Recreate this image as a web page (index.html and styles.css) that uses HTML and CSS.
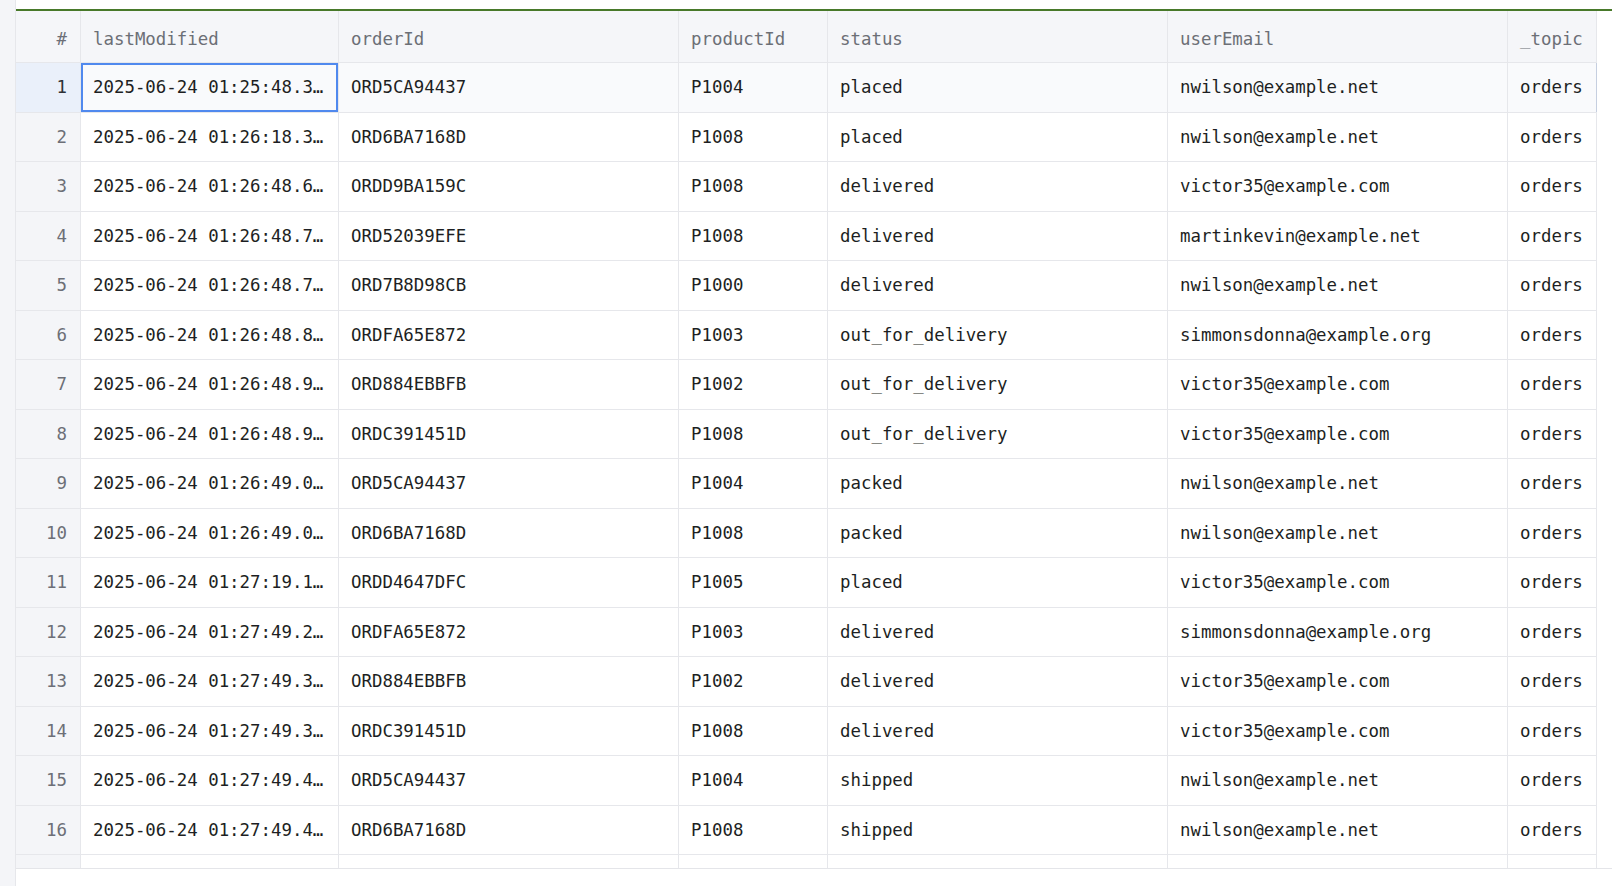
FILE: index.html
```html
<!DOCTYPE html>
<html lang="en">
<head>
<meta charset="utf-8">
<title>orders</title>
<link rel="stylesheet" href="styles.css">
</head>
<body>
<div class="page">
  <div class="strip"></div>
  <div class="main">
    <div class="grid">
      <div class="row head">
        <div class="cell num">#</div>
        <div class="cell c-lm">lastModified</div>
        <div class="cell c-oid">orderId</div>
        <div class="cell c-pid">productId</div>
        <div class="cell c-st">status</div>
        <div class="cell c-em">userEmail</div>
        <div class="cell c-tp">_topic</div>
      </div>
      <div class="row active">
        <div class="cell num">1</div>
        <div class="cell c-lm focus">2025-06-24 01:25:48.3…</div>
        <div class="cell c-oid">ORD5CA94437</div>
        <div class="cell c-pid">P1004</div>
        <div class="cell c-st">placed</div>
        <div class="cell c-em">nwilson@example.net</div>
        <div class="cell c-tp">orders</div>
      </div>
      <div class="row">
        <div class="cell num">2</div>
        <div class="cell c-lm">2025-06-24 01:26:18.3…</div>
        <div class="cell c-oid">ORD6BA7168D</div>
        <div class="cell c-pid">P1008</div>
        <div class="cell c-st">placed</div>
        <div class="cell c-em">nwilson@example.net</div>
        <div class="cell c-tp">orders</div>
      </div>
      <div class="row">
        <div class="cell num">3</div>
        <div class="cell c-lm">2025-06-24 01:26:48.6…</div>
        <div class="cell c-oid">ORDD9BA159C</div>
        <div class="cell c-pid">P1008</div>
        <div class="cell c-st">delivered</div>
        <div class="cell c-em">victor35@example.com</div>
        <div class="cell c-tp">orders</div>
      </div>
      <div class="row">
        <div class="cell num">4</div>
        <div class="cell c-lm">2025-06-24 01:26:48.7…</div>
        <div class="cell c-oid">ORD52039EFE</div>
        <div class="cell c-pid">P1008</div>
        <div class="cell c-st">delivered</div>
        <div class="cell c-em">martinkevin@example.net</div>
        <div class="cell c-tp">orders</div>
      </div>
      <div class="row">
        <div class="cell num">5</div>
        <div class="cell c-lm">2025-06-24 01:26:48.7…</div>
        <div class="cell c-oid">ORD7B8D98CB</div>
        <div class="cell c-pid">P1000</div>
        <div class="cell c-st">delivered</div>
        <div class="cell c-em">nwilson@example.net</div>
        <div class="cell c-tp">orders</div>
      </div>
      <div class="row">
        <div class="cell num">6</div>
        <div class="cell c-lm">2025-06-24 01:26:48.8…</div>
        <div class="cell c-oid">ORDFA65E872</div>
        <div class="cell c-pid">P1003</div>
        <div class="cell c-st">out_for_delivery</div>
        <div class="cell c-em">simmonsdonna@example.org</div>
        <div class="cell c-tp">orders</div>
      </div>
      <div class="row">
        <div class="cell num">7</div>
        <div class="cell c-lm">2025-06-24 01:26:48.9…</div>
        <div class="cell c-oid">ORD884EBBFB</div>
        <div class="cell c-pid">P1002</div>
        <div class="cell c-st">out_for_delivery</div>
        <div class="cell c-em">victor35@example.com</div>
        <div class="cell c-tp">orders</div>
      </div>
      <div class="row">
        <div class="cell num">8</div>
        <div class="cell c-lm">2025-06-24 01:26:48.9…</div>
        <div class="cell c-oid">ORDC391451D</div>
        <div class="cell c-pid">P1008</div>
        <div class="cell c-st">out_for_delivery</div>
        <div class="cell c-em">victor35@example.com</div>
        <div class="cell c-tp">orders</div>
      </div>
      <div class="row">
        <div class="cell num">9</div>
        <div class="cell c-lm">2025-06-24 01:26:49.0…</div>
        <div class="cell c-oid">ORD5CA94437</div>
        <div class="cell c-pid">P1004</div>
        <div class="cell c-st">packed</div>
        <div class="cell c-em">nwilson@example.net</div>
        <div class="cell c-tp">orders</div>
      </div>
      <div class="row">
        <div class="cell num">10</div>
        <div class="cell c-lm">2025-06-24 01:26:49.0…</div>
        <div class="cell c-oid">ORD6BA7168D</div>
        <div class="cell c-pid">P1008</div>
        <div class="cell c-st">packed</div>
        <div class="cell c-em">nwilson@example.net</div>
        <div class="cell c-tp">orders</div>
      </div>
      <div class="row">
        <div class="cell num">11</div>
        <div class="cell c-lm">2025-06-24 01:27:19.1…</div>
        <div class="cell c-oid">ORDD4647DFC</div>
        <div class="cell c-pid">P1005</div>
        <div class="cell c-st">placed</div>
        <div class="cell c-em">victor35@example.com</div>
        <div class="cell c-tp">orders</div>
      </div>
      <div class="row">
        <div class="cell num">12</div>
        <div class="cell c-lm">2025-06-24 01:27:49.2…</div>
        <div class="cell c-oid">ORDFA65E872</div>
        <div class="cell c-pid">P1003</div>
        <div class="cell c-st">delivered</div>
        <div class="cell c-em">simmonsdonna@example.org</div>
        <div class="cell c-tp">orders</div>
      </div>
      <div class="row">
        <div class="cell num">13</div>
        <div class="cell c-lm">2025-06-24 01:27:49.3…</div>
        <div class="cell c-oid">ORD884EBBFB</div>
        <div class="cell c-pid">P1002</div>
        <div class="cell c-st">delivered</div>
        <div class="cell c-em">victor35@example.com</div>
        <div class="cell c-tp">orders</div>
      </div>
      <div class="row">
        <div class="cell num">14</div>
        <div class="cell c-lm">2025-06-24 01:27:49.3…</div>
        <div class="cell c-oid">ORDC391451D</div>
        <div class="cell c-pid">P1008</div>
        <div class="cell c-st">delivered</div>
        <div class="cell c-em">victor35@example.com</div>
        <div class="cell c-tp">orders</div>
      </div>
      <div class="row">
        <div class="cell num">15</div>
        <div class="cell c-lm">2025-06-24 01:27:49.4…</div>
        <div class="cell c-oid">ORD5CA94437</div>
        <div class="cell c-pid">P1004</div>
        <div class="cell c-st">shipped</div>
        <div class="cell c-em">nwilson@example.net</div>
        <div class="cell c-tp">orders</div>
      </div>
      <div class="row">
        <div class="cell num">16</div>
        <div class="cell c-lm">2025-06-24 01:27:49.4…</div>
        <div class="cell c-oid">ORD6BA7168D</div>
        <div class="cell c-pid">P1008</div>
        <div class="cell c-st">shipped</div>
        <div class="cell c-em">nwilson@example.net</div>
        <div class="cell c-tp">orders</div>
      </div>
      <div class="row tail">
        <div class="cell num"></div>
        <div class="cell c-lm"></div>
        <div class="cell c-oid"></div>
        <div class="cell c-pid"></div>
        <div class="cell c-st"></div>
        <div class="cell c-em"></div>
        <div class="cell c-tp"></div>
      </div>
    </div>
  </div>
</div>
</body>
</html>
```

FILE: styles.css
```css
html, body {
  margin: 0;
  padding: 0;
  background: #ffffff;
}

body {
  font-family: "DejaVu Sans Mono", "Liberation Mono", monospace;
  font-size: 17.4px;
  color: #1d1f23;
}

.page {
  display: flex;
  height: 886px;
  overflow: hidden;
}

.strip {
  width: 15px;
  flex: none;
  background: #f4f5f8;
}

.main {
  flex: 1;
  min-width: 0;
  padding-top: 9px;
  border-left: 1px solid #e6e7eb;
  background: #ffffff;
}

.grid {
  height: 857px;
  border-top: 2px solid #48792a;
  border-bottom: 1px solid #e4e5e9;
  overflow: hidden;
}

.row {
  display: flex;
  height: 49.5px;
  box-sizing: border-box;
  border-bottom: 1px solid #e6e7eb;
  width: 1581px;
}

.row.head {
  height: 52px;
  background: #f5f6f9;
  color: #6c6f76;
}

.row.head .cell {
  padding-top: 6px;
  line-height: 45px;
}

.cell {
  box-sizing: border-box;
  flex: none;
  padding: 0 12px;
  border-right: 1px solid #e6e7eb;
  white-space: nowrap;
  overflow: hidden;
  line-height: 48.5px;
}

.cell.num {
  width: 65px;
  text-align: right;
  padding-left: 0;
  padding-right: 13px;
  background: #f4f5f8;
  color: #6c6f77;
}

.row.head .cell.num {
  background: #f5f6f9;
}

.c-lm { width: 258px; }
.c-oid { width: 340px; }
.c-pid { width: 149px; }
.c-st { width: 340px; }
.c-em { width: 340px; }
.c-tp { width: 89px; }

.row.active {
  background: #f9fafc;
}

.row.active .cell.num {
  background: #eaf0fa;
  color: #2f3237;
}

.row.active .c-tp {
  border-right-color: #c6cfe0;
}

.cell.focus {
  box-shadow: inset 0 0 0 2px #5089ee;
}
```
